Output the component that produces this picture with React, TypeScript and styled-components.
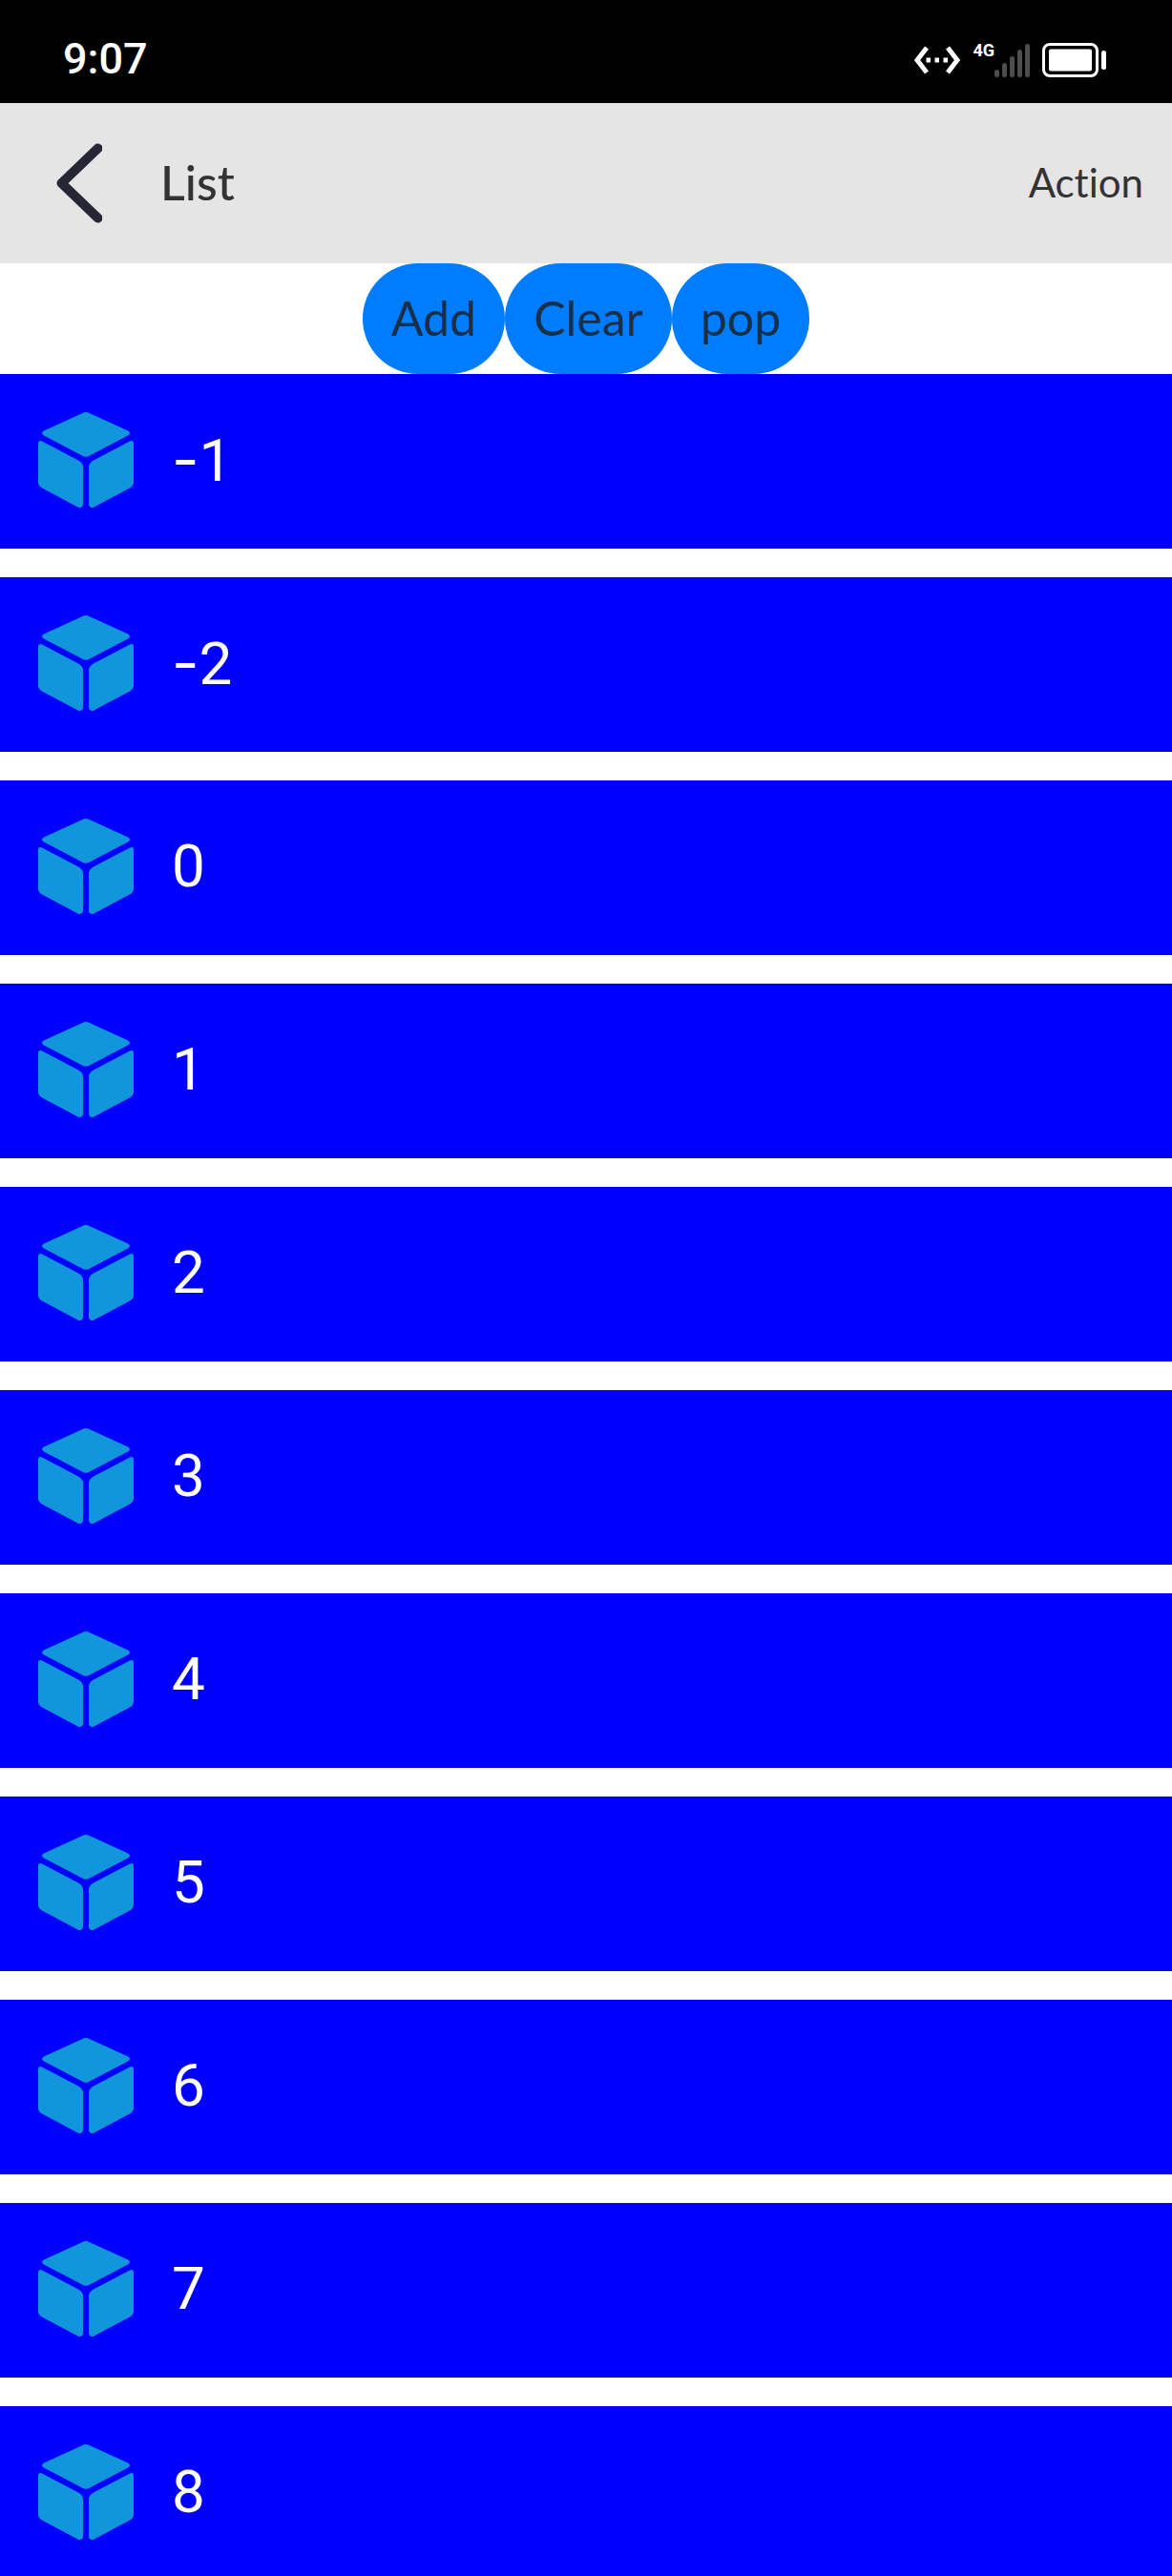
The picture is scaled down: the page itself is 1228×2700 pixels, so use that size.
import React from "react";
import styled, { createGlobalStyle } from "styled-components";

const textFont = 'Lato, "Open Sans", sans-serif';
const numberFont = 'Roboto, Lato, sans-serif';

const GlobalStyle = createGlobalStyle`
  *, *::before, *::after { box-sizing: border-box; }
  body { margin: 0; background: #fff; font-family: ${textFont}; font-variant-ligatures: none; }
  button { border: 0; margin: 0; font-family: inherit; font-variant-ligatures: none; cursor: pointer; }
`;

const Screen = styled.div`
  height: 100vh;
  overflow: hidden;
`;

const StatusBar = styled.div`
  display: flex;
  align-items: center;
  justify-content: space-between;
  height: 108px;
  padding: 18px 68px 0 66px;
  background: #000;
  color: #fff;
`;

const Clock = styled.time`
  padding-bottom: 2px;
  font: 500 45px/54px ${numberFont};
`;

const StatusIcons = styled.div`
  display: flex;
  align-items: center;
  gap: 12px;
`;

const Signal = styled.div`
  display: flex;
  align-items: flex-start;
`;

const NetworkType = styled.span`
  font: 700 18px/16px ${numberFont};
`;

const TitleBar = styled.header`
  display: flex;
  align-items: center;
  height: 168px;
  padding: 0 30px 0 47px;
  background: #e5e5e5;
  color: #333;
`;

const BackButton = styled.button`
  display: flex;
  align-items: center;
  padding: 0 12px;
  background: transparent;
`;

const Title = styled.h1`
  flex: 1;
  margin: 0;
  padding: 0 0 2px 49px;
  font-size: 50px;
  line-height: 60px;
  font-weight: 500;
`;

const ActionButton = styled.button`
  padding: 0 0 2px;
  background: transparent;
  color: #333;
  font-size: 42px;
  line-height: 50px;
`;

const Toolbar = styled.div`
  display: flex;
  justify-content: center;
`;

const Pill = styled.button`
  height: 116px;
  padding: 0 30px 2px;
  border-radius: 58px;
  background: #007dff;
  color: #182f48;
  font-size: 50px;
  line-height: 60px;
`;

const List = styled.ul`
  display: flex;
  flex-direction: column;
  gap: 30px;
  margin: 0;
  padding: 0;
  list-style: none;
`;

const Row = styled.li`
  display: flex;
  align-items: center;
  gap: 40px;
  padding: 40px 40px 42px;
  border-bottom: 1px solid #0000cc;
  background: #0000ff;
  color: #fff;
  font: 400 62px/72px ${numberFont};
`;

/* Inter's hyphen is wide enough to read as a minus sign. */
const Sign = styled.span`
  font-family: Inter, sans-serif;
`;

const Cube = () => (
  <svg width="100" height="100" viewBox="0 0 100 100" fill="#1296db" aria-hidden="true">
    <path d="M46.500 1Q50 -0.800 53.500 1L94 19.500Q98 22 94 24.500L54 45.500Q50 48 46 45.500L6 24.500Q2 22 6 19.500Z" />
    <path d="M0 33Q0 29 4 30.500L42 50.500Q47 53 47 58V97Q46 101 42 99.700L4 79.500Q0 77 0 73.500Z" />
    <path d="M100 33Q100 29 96 30.500L58 50.500Q53 53 53 58V97Q54 101 58 99.700L96 79.500Q100 77 100 73.500Z" />
  </svg>
);

const items = [-1, -2, 0, 1, 2, 3, 4, 5, 6, 7, 8];
const bars = [8, 15, 22, 29, 35];

export default function App() {
  return (
    <Screen>
      <GlobalStyle />
      <StatusBar>
        <Clock>9:07</Clock>
        <StatusIcons>
          <svg width="50" height="32" viewBox="0 0 50 32" fill="none" stroke="#fff" strokeWidth="5" aria-hidden="true">
            <path d="M14 3L4 16L14 29M36 3L46 16L36 29" />
            <path d="M13.500 16H36.500" strokeDasharray="4.500 4.500" />
          </svg>
          <Signal>
            <NetworkType>4G</NetworkType>
            <svg width="38" height="36" viewBox="0 0 38 36" fill="#4d4d4d" aria-hidden="true">
              {bars.map((h, i) => (
                <rect key={h} x={i * 8} y={36 - h} width="5" height={h} rx="2.5" />
              ))}
            </svg>
          </Signal>
          <svg width="68" height="36" viewBox="0 0 68 36" fill="#fff" aria-hidden="true">
            <rect x="1.500" y="1.500" width="56" height="33" rx="6.500" fill="none" stroke="#fff" strokeWidth="3" />
            <rect x="7" y="6.500" width="45" height="23" rx="2" />
            <rect x="62" y="8" width="5" height="20" rx="2.500" />
          </svg>
        </StatusIcons>
      </StatusBar>
      <TitleBar>
        <BackButton aria-label="Back">
          <svg width="48" height="84" viewBox="0 0 48 84" fill="none" stroke="#272636" strokeWidth="10" strokeLinecap="round" strokeLinejoin="round" aria-hidden="true">
            <path d="M43.500 5.500L5.500 42L43.500 78.500" />
          </svg>
        </BackButton>
        <Title>List</Title>
        <ActionButton>Action</ActionButton>
      </TitleBar>
      <Toolbar>
        <Pill>Add</Pill>
        <Pill>Clear</Pill>
        <Pill>pop</Pill>
      </Toolbar>
      <List>
        {items.map((n) => (
          <Row key={n}>
            <Cube />
            <span>
              {n < 0 && <Sign>-</Sign>}
              {Math.abs(n)}
            </span>
          </Row>
        ))}
      </List>
    </Screen>
  );
}
